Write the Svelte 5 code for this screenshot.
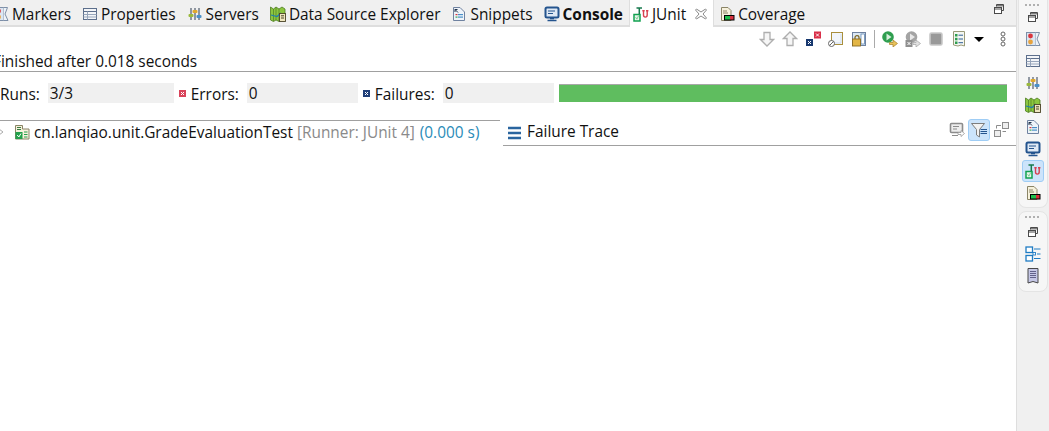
<script>
  const tabs = [
    { name: 'Markers', icon: 'markers' },
    { name: 'Properties', icon: 'props' },
    { name: 'Servers', icon: 'servers' },
    { name: 'Data Source Explorer', icon: 'map' },
    { name: 'Snippets', icon: 'snippets' },
  ];
</script>

{#snippet icon(name)}
  <svg class="ico" viewBox="0 0 16 16" width="16" height="16">
    {#if name === 'markers'}
      <rect x="1.5" y="1.5" width="9" height="13" fill="#dbe6f2" stroke="#7d8fa8" />
      <circle cx="5.5" cy="5" r="2.4" fill="#d9363e" />
      <circle cx="5.5" cy="11" r="2.4" fill="#e8a33d" />
      <path d="M10.5 1.5 L14.5 1.5 L12 8 L15 14.5 L10.5 14.5" fill="#eef3f8" stroke="#7d8fa8" />
    {:else if name === 'props'}
      <rect x="1.5" y="2.5" width="13" height="11" fill="#f3f5f8" stroke="#5d6f8c" />
      <path d="M1.5 5.5 H14.5" stroke="#5d6f8c" />
      <path d="M1.5 8.5 H14.5 M1.5 11 H14.5 M5.5 5.5 V13.5" stroke="#98a6bb" fill="none" />
    {:else if name === 'servers'}
      <path d="M4 2 V14 M8 2 V14 M12 2 V14" stroke="#2f3d50" fill="none" />
      <rect x="1.5" y="8" width="5" height="3" rx="1" fill="#9bb93c" />
      <rect x="5.5" y="4" width="5" height="3" rx="1" fill="#e0a92e" />
      <rect x="9.5" y="9" width="5" height="3" rx="1" fill="#4a90c8" />
    {:else if name === 'map'}
      <path d="M0.5 1 L3.5 3 L6 1 L9 3 L12 1 L15 3 V11 L12 14 L9 15.5 L6 14 L3.5 15.5 L0.5 14 Z" fill="#8cc63f" stroke="#4d7c22" stroke-width="0.8" />
      <path d="M3.5 3 V15 M6 1.5 V14 M9 3 V15" stroke="#4d7c22" stroke-width="0.7" />
      <path d="M1 9 L7 10.5 L11 7" stroke="#1f7fae" stroke-width="1.2" fill="none" />
      <rect x="9.5" y="7.5" width="6" height="8" fill="#efe6c0" stroke="#4a4426" stroke-width="0.9" />
      <path d="M11 9.8 H14 M11 12 H14" stroke="#4a4426" />
    {:else if name === 'snippets'}
      <path d="M2.5 1.5 H9 L13.5 6 V14.5 H2.5 Z" fill="#eef3f9" stroke="#6f82a0" />
      <path d="M4 3.5 L7 6.5 M4 3.5 H6.5 M4 3.5 V6" stroke="#1f3048" fill="none" />
      <rect x="4.5" y="8" width="2" height="1.2" fill="#d9363e" />
      <rect x="7" y="8" width="5" height="1.2" fill="#4a90c8" />
      <rect x="4.5" y="10.5" width="2" height="1.2" fill="#3aa655" />
      <rect x="7" y="10.5" width="5" height="1.2" fill="#4a90c8" />
    {:else if name === 'console'}
      <rect x="1.5" y="1.5" width="13" height="10" rx="1.5" fill="#dfe9f5" stroke="#24548e" stroke-width="2" />
      <path d="M4 5 H11 M4 7.5 H9" stroke="#24548e" />
      <path d="M3.5 14.5 H12.5 M6 12.5 H10" stroke="#24548e" stroke-width="1.6" />
    {:else if name === 'junit'}
      <path d="M1 8.5 H7 V15 H1 Z" fill="#eaf6ec" stroke="#12a150" stroke-width="1.5" />
      <path d="M2.6 11.2 L3.9 13.2 L5.6 9.7" stroke="#7ccf96" fill="none" />
      <path d="M3.5 2 H9 M6.3 2 V8" stroke="#17794e" stroke-width="1.5" fill="none" />
      <path d="M10.5 5 V9 C10.5 11.8 14.2 11.8 14.2 9 V5 M9.3 4.7 H11.7 M13 4.7 H15.4" stroke="#d8404f" stroke-width="1.4" fill="none" />
    {:else if name === 'coverage'}
      <path d="M2.5 1.5 H9 L12 4.5 V14.5 H2.5 Z" fill="#f6f1dc" stroke="#8a8466" />
      <path d="M4 5 H8 M4 7 H9" stroke="#8a8466" />
      <rect x="5" y="9" width="10.5" height="5.5" fill="#000" />
      <rect x="6" y="10" width="5" height="3.5" fill="#1fbf4c" />
      <rect x="11" y="10" width="3.5" height="3.5" fill="#d9303c" />
    {:else if name === 'restore'}
      <path d="M5.5 5.5 V3.5 H12.5 V9.5 H10.5" stroke="#4a4a4a" fill="none" />
      <rect x="3.5" y="6.5" width="7" height="6" fill="#fff" stroke="#4a4a4a" />
      <path d="M3.5 8 H10.5 M5.5 4.8 H12.5" stroke="#4a4a4a" />
    {:else if name === 'close'}
      <path d="M3.5 3 L8 6 L12.5 3 L13.5 4 L10 8 L13.5 12 L12.5 13 L8 10 L3.5 13 L2.5 12 L6 8 L2.5 4 Z" fill="#fff" stroke="#8a8a8a" />
    {:else if name === 'down'}
      <path d="M5 1.5 H11 V8.5 H14.5 L8 15 L1.5 8.5 H5 Z" fill="#f6f6f6" stroke="#aeaeae" stroke-width="1.3" />
    {:else if name === 'up'}
      <path d="M5 14.5 H11 V7.5 H14.5 L8 1 L1.5 7.5 H5 Z" fill="#f6f6f6" stroke="#aeaeae" stroke-width="1.3" />
    {:else if name === 'nextfail'}
      <rect x="9" y="0.5" width="7" height="7" fill="#d9304a" />
      <path d="M11 2.5 L14 5.5 M14 2.5 L11 5.5" stroke="#fff" />
      <rect x="1" y="8" width="7" height="7" fill="#17386f" />
      <path d="M3 10 L6 13 M6 10 L3 13" stroke="#fff" />
    {:else if name === 'filter'}
      <rect x="3.5" y="1.5" width="11" height="12" fill="#f2f6fb" stroke="#a98f3c" />
      <path d="M13 3 V12 H6" stroke="#cfdcec" fill="none" />
      <circle cx="3.5" cy="12.5" r="3" fill="#fff" stroke="#666" />
      <path d="M1.5 14.5 L5.5 10.5" stroke="#666" />
    {:else if name === 'lock'}
      <rect x="1.5" y="1.5" width="13" height="13" fill="#dce8f4" stroke="#6f82a0" />
      <rect x="10" y="3" width="3.5" height="10" fill="#fff" stroke="#4a78a8" stroke-width="0.7" />
      <path d="M4 8 V6.5 C4 4 8 4 8 6.5 V8" stroke="#7a6420" stroke-width="1.2" fill="none" />
      <rect x="1.5" y="8" width="8" height="7" fill="#e3b646" stroke="#8a6a20" stroke-width="0.9" />
    {:else if name === 'rerun'}
      <circle cx="6" cy="6" r="5.8" fill="#2f9e4f" />
      <path d="M4.5 2.5 L9.5 6 L4.5 9.5 Z" fill="#d7f0dd" />
      <path d="M7.5 11.5 H11 V9 L15.5 12.5 L11 16 V13.5 H7.5 Z" fill="#e8c25a" stroke="#a3802a" stroke-width="0.7" />
    {:else if name === 'rerunoff'}
      <circle cx="6.5" cy="6" r="5.8" fill="#a4a4a4" />
      <path d="M5 2.5 L10 6 L5 9.5 Z" fill="#e8e8e8" />
      <rect x="0.5" y="9" width="7" height="7" fill="#8f8f8f" />
      <path d="M2.5 11 L5.5 14 M5.5 11 L2.5 14" stroke="#fff" />
      <path d="M8 11.5 H11 V9 L15.5 12.5 L11 16 V13.5 H8 Z" fill="#e2e2e2" stroke="#a4a4a4" stroke-width="0.7" />
    {:else if name === 'stop'}
      <rect x="2" y="2" width="12" height="12" rx="1.5" fill="#999" stroke="#c8c8c8" stroke-width="1.6" />
    {:else if name === 'history'}
      <path d="M2.5 0.5 H13.5 V15 L10 14 L7 15 L2.5 14 Z" fill="#f4f7f2" stroke="#9a9a78" />
      <rect x="4" y="3" width="2.5" height="2.5" fill="#2f9e4f" />
      <rect x="4" y="6.8" width="2.5" height="2.5" fill="#2f9e4f" />
      <rect x="4" y="10.5" width="2.5" height="2.5" fill="#2f9e4f" />
      <path d="M7.5 4.2 H12 M7.5 8 H12 M7.5 11.7 H12" stroke="#2d5c94" />
    {:else if name === 'tree'}
      <path d="M1.5 1.5 H8.5 V5 H15 V15 H1.5 Z" fill="#f6f1dc" stroke="#8a8466" />
      <rect x="1.5" y="8" width="7" height="7" fill="#22a04a" />
      <path d="M3.2 11 L4.8 13 L7 9.5" stroke="#fff" fill="none" />
      <path d="M3 3.5 H7 M3 5.5 H7" stroke="#3a7a40" />
      <path d="M10 8 H13.5 M10 10.5 H13.5 M10 13 H13.5" stroke="#22a04a" stroke-width="1.2" />
    {:else if name === 'trace'}
      <path d="M1 3 H14 M1 8 H14 M1 13 H14" stroke="#2a659f" stroke-width="2.4" />
    {:else if name === 'compare'}
      <rect x="1.5" y="1.5" width="12" height="9" rx="1" fill="#eee" stroke="#8c8c8c" stroke-width="1.6" />
      <path d="M4 4.5 H10 M4 7 H8 M3 13.5 H9" stroke="#8c8c8c" />
      <path d="M9 10.5 H12 V8.5 L15.5 11.5 L12 14.5 V12.5 H9 Z" fill="#fff" stroke="#999" stroke-width="0.8" />
    {:else if name === 'funnel'}
      <path d="M0.5 1.5 H13.5 L8.5 7.5 V15 L5.5 13 V7.5 Z" fill="#f2f2f2" stroke="#7d7d7d" />
      <path d="M9.5 7.5 H16 M9.5 9.5 H16 M9.5 11.5 H16" stroke="#24548e" />
    {:else if name === 'layout'}
      <rect x="9.5" y="0.5" width="6" height="6" fill="#eee" stroke="#8c8c8c" />
      <rect x="1.5" y="8.5" width="6" height="6" fill="#eee" stroke="#8c8c8c" />
      <path d="M9.5 9.5 H13 M8 3.5 H3.5 V6.5" stroke="#8c8c8c" fill="none" />
    {:else if name === 'outline'}
      <rect x="1" y="1" width="6.5" height="5.5" fill="#fff" stroke="#1f7cc4" stroke-width="1.3" />
      <rect x="1" y="9.5" width="6.5" height="5.5" fill="#fff" stroke="#1f7cc4" stroke-width="1.3" />
      <rect x="8" y="6.5" width="2.5" height="2.5" fill="#fff" stroke="#1f7cc4" stroke-width="0.9" />
      <path d="M9 3 H15.5 M12 8 H15.5 M9 12.5 H15.5" stroke="#1f7cc4" />
    {:else if name === 'task'}
      <path d="M3 0.5 H13 V15 L8 13.5 L3 15 Z" fill="#c5c7e6" stroke="#484848" />
      <path d="M5 3.5 H11 M5 5.5 H11 M5 7.5 H11 M5 9.5 H11" stroke="#62628a" />
    {/if}
  </svg>
{/snippet}

<div class="page">
  <main class="view">
    <div class="tabbar">
      <div class="tabs">
        {#each tabs as t}
          <div class="tab">{@render icon(t.icon)}<span>{t.name}</span></div>
        {/each}
        <div class="tab console">{@render icon('console')}<span>Console</span></div>
        <div class="tab active">{@render icon('junit')}<span>JUnit</span>{@render icon('close')}</div>
        <div class="tab">{@render icon('coverage')}<span>Coverage</span></div>
      </div>
      <div class="restore">{@render icon('restore')}</div>
    </div>

    <div class="toolbar">
      {@render icon('down')}
      {@render icon('up')}
      {@render icon('nextfail')}
      {@render icon('filter')}
      {@render icon('lock')}
      <i class="sep"></i>
      {@render icon('rerun')}
      {@render icon('rerunoff')}
      {@render icon('stop')}
      {@render icon('history')}
      <i class="menu"></i>
      <svg class="kebab" width="6" height="16" viewBox="0 0 6 16">
        <circle cx="3" cy="3" r="2" /><circle cx="3" cy="8" r="2" /><circle cx="3" cy="13" r="2" />
      </svg>
    </div>

    <div class="status">Finished after 0.018 seconds</div>

    <div class="counters">
      <span class="lbl">Runs:</span>
      <span class="val v1">3/3</span>
      <svg class="mark" width="7" height="7" viewBox="0 0 7 7"><rect width="7" height="7" fill="#d9435a" /><path d="M2 2 L5 5 M5 2 L2 5" stroke="#fff" /></svg>
      <span class="lbl">Errors:</span>
      <span class="val v2">0</span>
      <svg class="mark" width="7" height="7" viewBox="0 0 7 7"><rect width="7" height="7" fill="#1f3e78" /><path d="M2 2 L5 5 M5 2 L2 5" stroke="#fff" /></svg>
      <span class="lbl">Failures:</span>
      <span class="val v3">0</span>
      <div class="bar"></div>
    </div>

    <div class="panes">
      <div class="left">
        <div class="row">
          <svg class="arrow" width="6" height="8" viewBox="0 0 6 8"><path d="M1 1 L5 4 L1 7" fill="none" stroke="#aaa" /></svg>
          {@render icon('tree')}
          <span class="suite">cn.lanqiao.unit.GradeEvaluationTest</span>
          <span class="runner">[Runner: JUnit 4]</span>
          <span class="time">(0.000 s)</span>
        </div>
      </div>
      <div class="right">
        {@render icon('trace')}
        <span class="trace">Failure Trace</span>
        <div class="trace-tools">
          {@render icon('compare')}
          <span class="toggled">{@render icon('funnel')}</span>
          {@render icon('layout')}
        </div>
      </div>
    </div>
  </main>

  <aside class="side">
    <div class="stack top">
      <div class="dots"></div>
      {@render icon('restore')}
      {@render icon('markers')}
      {@render icon('props')}
      {@render icon('servers')}
      {@render icon('map')}
      {@render icon('snippets')}
      {@render icon('console')}
      <span class="toggled">{@render icon('junit')}</span>
      {@render icon('coverage')}
    </div>
    <div class="stack bottom">
      <div class="dots"></div>
      {@render icon('restore')}
      {@render icon('outline')}
      {@render icon('task')}
    </div>
  </aside>
</div>

<style>
  :global(body) {
    margin: 0;
    background: #fff;
  }

  .page {
    display: flex;
    width: 1049px;
    height: 431px;
    overflow: hidden;
    font-family: "Open Sans", "Noto Sans", sans-serif;
    font-size: 15.4px;
    color: #111;
  }

  .ico {
    flex: none;
    display: block;
  }

  .view {
    width: 1016px;
    flex: none;
    overflow: hidden;
  }

  .tabbar {
    display: flex;
    justify-content: space-between;
    height: 25px;
    background: #f0f0f0;
    border-bottom: 2px solid #dedede;
  }

  .tabs {
    display: flex;
    margin-left: -12px;
  }

  .tab {
    display: flex;
    align-items: center;
    gap: 3px;
    height: 27px;
    padding: 0 6px 0 5px;
    white-space: nowrap;
  }

  .tab span {
    padding-top: 2px;
  }

  .console span {
    font-weight: 700;
  }

  .active {
    background: #fff;
    border-left: 1px solid #dedede;
    border-right: 1px solid #dedede;
    padding: 0 4px 0 3px;
  }

  .active span {
    margin-right: 4px;
  }

  .restore {
    padding: 1px 9px 0 0;
  }

  .toolbar {
    display: flex;
    align-items: center;
    justify-content: flex-end;
    gap: 7px;
    height: 24px;
    padding: 0 10px 0 0;
  }

  .sep {
    width: 1px;
    height: 18px;
    background: #aaa;
  }

  .menu {
    width: 0;
    height: 0;
    border: 5px solid transparent;
    border-top: 5px solid #000;
    border-bottom: 0;
    margin-right: 9px;
  }

  .kebab circle {
    fill: #fff;
    stroke: #666;
  }

  .status {
    height: 19px;
    padding-top: 1px;
    line-height: 20px;
    margin-left: -7px;
    border-bottom: 1px solid #a0a0a0;
  }

  .counters {
    display: flex;
    align-items: center;
    height: 20px;
    margin-top: 11px;
  }

  .lbl {
    margin-right: 8px;
    padding-top: 2px;
  }

  .val {
    height: 20px;
    line-height: 22px;
    background: #f0f0f0;
    padding-left: 2px;
  }

  .v1 { width: 124px; margin-right: 5px; }
  .v2 { width: 109px; margin-right: 5px; }
  .v3 { width: 109px; margin-right: 5px; }

  .mark {
    flex: none;
    margin-right: 5px;
  }

  .bar {
    width: 448px;
    height: 17px;
    background: #5fbd5f;
    border-top: 1px solid #a8a8a8;
  }

  .panes {
    display: flex;
    margin-top: 17px;
  }

  .left {
    width: 500px;
    flex: none;
    border-top: 1px solid #a0a0a0;
  }

  .row {
    display: flex;
    align-items: center;
    gap: 4px;
    height: 22px;
    padding-bottom: 2px;
    white-space: nowrap;
  }

  .arrow {
    margin-left: -2px;
    margin-right: 6px;
  }

  .runner { color: #8a8a8a; }
  .time { color: #2a8bb8; margin-left: 1px; }

  .right {
    flex: 1;
    display: flex;
    align-items: center;
    gap: 3px;
    height: 25px;
    margin-left: 3px;
    padding-left: 4px;
    padding-right: 7px;
    border-bottom: 1px solid #a0a0a0;
  }

  .trace {
    margin: 0 0 2px 1px;
  }

  .trace-tools {
    margin-left: auto;
    margin-bottom: 5px;
    display: flex;
    align-items: center;
    gap: 3px;
  }

  .toggled {
    display: block;
    background: #cce4fb;
    border: 1px solid #9fcdf5;
    border-radius: 3px;
    padding: 2px;
  }

  .side {
    width: 33px;
    flex: none;
    background: #f0f0f0;
    border-left: 1px solid #dedede;
    padding-left: 1px;
  }

  .stack {
    box-sizing: border-box;
    width: 30px;
    display: flex;
    flex-direction: column;
    align-items: center;
    gap: 6px;
    background: #f6f6f6;
    border: 1px solid #e4e4e4;
    border-top: 0;
    border-radius: 0 0 8px 8px;
  }

  .stack .toggled {
    margin: -3px 0;
  }

  .top {
    padding-bottom: 6px;
  }

  .dots {
    width: 16px;
    height: 2px;
    margin-top: 4px;
    margin-bottom: -3px;
    background: repeating-linear-gradient(90deg, #b0b0b0 0 2px, transparent 2px 4px);
  }

  .bottom {
    margin-top: 3px;
    border-top: 1px solid #e4e4e4;
    border-radius: 8px;
    padding-bottom: 7px;
  }

  .bottom .dots {
    margin-bottom: 0;
  }
</style>
